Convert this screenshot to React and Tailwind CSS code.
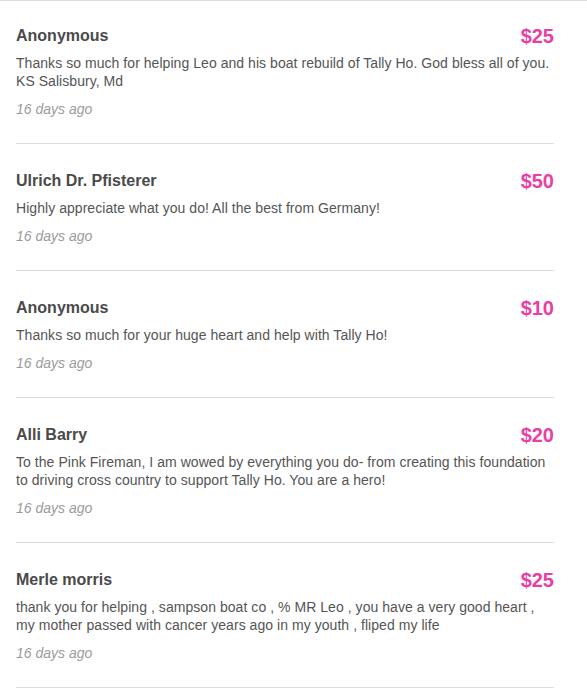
const donations = [
    {
        name: "Anonymous",
        amount: "$25",
        message:
            "Thanks so much for helping Leo and his boat rebuild of Tally Ho. God bless all of you. KS Salisbury, Md",
    },
    {
        name: "Ulrich Dr. Pfisterer",
        amount: "$50",
        message: "Highly appreciate what you do! All the best from Germany!",
    },
    {
        name: "Anonymous",
        amount: "$10",
        message: "Thanks so much for your huge heart and help with Tally Ho!",
    },
    {
        name: "Alli Barry",
        amount: "$20",
        message:
            "To the Pink Fireman, I am wowed by everything you do- from creating this foundation to driving cross country to support Tally Ho. You are a hero!",
    },
    {
        name: "Merle morris",
        amount: "$25",
        message:
            "thank you for helping , sampson boat co , % MR Leo , you have a very good heart , my mother passed with cancer years ago in my youth , fliped my life",
    },
];

function DonationRow({ name, amount, message, first }) {
    return (
        <div className={`border-b border-[#dcdcdc] pb-[24px] ${first ? "pt-[21px]" : "pt-[23px]"}`}>
            <div className="flex items-center justify-between h-[28px]">
                <span className="text-[16px] font-bold text-[#4a4a4a]">{name}</span>
                <span className="text-[20px] font-bold text-[#e83fa5]">{amount}</span>
            </div>
            <p className="mt-[4px] text-[14px] leading-[18px] text-[#555555] tracking-[0.05px]">{message}</p>
            <p className="mt-[9px] text-[14px] leading-[20px] italic text-[#9b9b9b]">16 days ago</p>
        </div>
    );
}

export default function App() {
    return (
        <div
            className="min-h-screen bg-white border-t border-[#dcdcdc]"
            style={{ fontFamily: '"Liberation Sans", Arial, sans-serif' }}
        >
            <div className="pl-[16px] pr-[33px]">
                {donations.map((d, i) => (
                    <DonationRow key={i} {...d} first={i === 0} />
                ))}
            </div>
        </div>
    );
}
